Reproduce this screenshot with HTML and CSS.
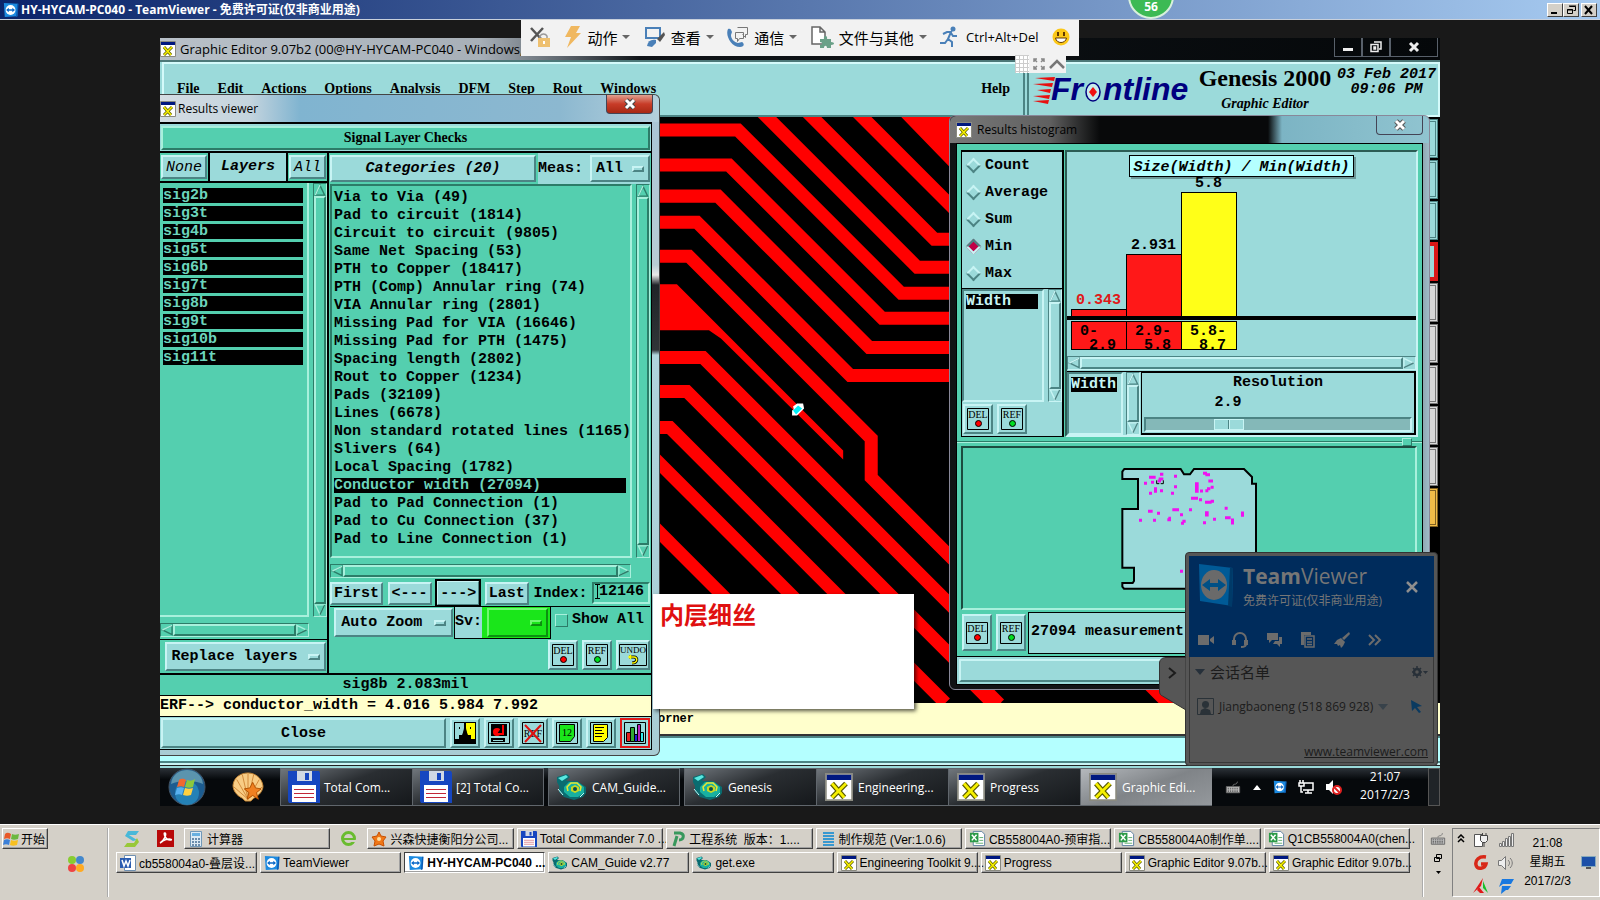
FILE: index.html
```html
<!DOCTYPE html>
<html lang="zh-CN">
<head>
  <meta charset="UTF-8">
  <meta name="viewport" content="width=device-width, initial-scale=1.0">
  <title>HY-HYCAM-PC040 - TeamViewer</title>
  <link rel="stylesheet" href="styles.css">
</head>
<body>
  <!-- Shared icons -->
  <svg class="defs" width="0" height="0">
    <symbol id="i-x" viewBox="0 0 16 16"><path fill="#fff" stroke="#8a8a80" d="M.5.5h15v15H.5z"/><path fill="#001880" d="M1 1h14v3H1z"/><path stroke="#5a5a00" stroke-width="3" d="M4 6l7 8M12 6l-8 8"/><path stroke="#f6f000" stroke-width="1.6" d="M4 6l7 8M12 6l-8 8"/></symbol>
    <symbol id="i-tv" viewBox="0 0 18 18"><path fill="#1c8ae0" d="M1 1l16 1-1 14-14 1z"/><path fill="#0b5cb4" d="M16 2h1.500l-1 14-2 1z"/><circle cx="8.500" cy="9" r="5.500" fill="#fff"/><path fill="#0a68c8" d="M3.500 9l3-2.500v1.700h4V6.500l3 2.500-3 2.500V9.800h-4v1.700z"/></symbol>
    <symbol id="i-floppy" viewBox="0 0 32 32"><path fill="#1646c0" d="M0 0h31l1 2v30H1l-1-2z"/><path fill="#d0d8e4" d="M9 0h15v10H9z"/><path fill="#1646c0" d="M17 2h4v7h-4z"/><path fill="#fff" d="M4 14h24v17H4z"/><path stroke="#c02838" d="M6 18.500h20M6 22.500h20M6 26.500h20"/></symbol>
    <symbol id="i-gen" viewBox="0 0 32 26"><path fill="#0a6c70" d="M1 3l10-3 3 3-4 4h11l9 6v6l-3 4-9 3-10-3-5-5v-6l-2-4z"/><path fill="#58e8e0" d="M2 4l8-3 2 2-6 4z"/><path fill="#18b0a0" d="M8 13l5-5h9l6 5v6l-6 4h-8l-6-5z"/><path fill="none" stroke="#e8e830" stroke-width="1.500" d="M12 17l-1-4 4-4h6l4 4-1 4"/><path fill="#c8d820" d="M15 13l4-2 4 2v4l-4 2-4-2z"/><circle cx="19" cy="15" r="2" fill="#08504c"/><path stroke="#c8f8f8" d="M2 15l5 6M24 23l4-4"/></symbol>
    <symbol id="i-xls" viewBox="0 0 18 18"><path fill="#fff" stroke="#5a80a0" d="M4.500 1.500h9l3 3v12h-12z"/><path fill="#2c9a48" d="M1 3h9v10H1z"/><path stroke="#fff" stroke-width="1.600" d="M3 5l5 6M8 5l-5 6"/><path stroke="#60b070" d="M11 8h4M11 11h4M7 14h8"/></symbol>
    <symbol id="i-key" viewBox="0 0 18 16"><path fill="#bbb" stroke="#666" d="M1.500 7.500h15v7h-15z"/><path stroke="#555" stroke-dasharray="1.500 1" d="M3 9.500h12M3 11.500h12M3 13h12"/><path fill="none" stroke="#777" d="M9 7c0-4 4 0 5-5"/></symbol>
    <symbol id="a-up" viewBox="0 0 13 13"><path fill="var(--face)" stroke="var(--dark)" stroke-width="1.500" d="M11.500 12L6.500 1.500 1.500 12z"/><path fill="none" stroke="var(--lite)" stroke-width="1.500" d="M6.500 1L1.500 12"/></symbol>
    <symbol id="a-down" viewBox="0 0 13 13"><path fill="var(--face)" stroke="var(--lite)" stroke-width="1.500" d="M1.500 1h10l-5 10.500z"/><path fill="none" stroke="var(--dark)" stroke-width="1.500" d="M11.500 1l-5 10.500"/></symbol>
    <symbol id="a-left" viewBox="0 0 13 13"><path fill="var(--face)" stroke="var(--dark)" stroke-width="1.500" d="M12 1.500L1.500 6.500 12 11.500z"/><path fill="none" stroke="var(--lite)" stroke-width="1.500" d="M12 1.500L1.500 6.500"/></symbol>
    <symbol id="a-right" viewBox="0 0 13 13"><path fill="var(--face)" stroke="var(--lite)" stroke-width="1.500" d="M1 1.500L11.500 6.500 1 11.500z"/><path fill="none" stroke="var(--dark)" stroke-width="1.500" d="M1 11.500L11.500 6.500"/></symbol>
  </svg>

  <header class="titlebar">
    <svg width="16" height="16"><use href="#i-tv"/></svg>
    <h1>HY-HYCAM-PC040 - TeamViewer - 免费许可证(仅非商业用途)</h1>
    <span class="badge">56</span>
    <div class="winbtns">
      <button aria-label="Minimize"><svg width="14" height="12"><path fill="#000" d="M3 8h6v2H3z"/></svg></button>
      <button aria-label="Restore"><svg width="14" height="12"><path fill="none" stroke="#000" d="M5.500 2.500h6v4h-2M3.500 5.500h5v4h-5zM5 2h7M3 6h6"/></svg></button>
      <button class="apart" aria-label="Close"><svg width="14" height="12"><path stroke="#000" stroke-width="2" d="M3 2l7 8M10 2L3 10"/></svg></button>
    </div>
  </header>

  <main class="stage">
    <div class="remote">

      <!-- Genesis graphic editor -->
      <section class="editor">
        <div class="editor-title">
          <svg width="16" height="16"><use href="#i-x"/></svg>
          <span class="glow">Graphic Editor 9.07b2 (00@HY-HYCAM-PC040 - Windows,</span>
          <div class="aero-btns">
            <button aria-label="Minimize"><svg width="14" height="12"><path fill="#eee" d="M2 7h10v3H2z"/></svg></button>
            <button aria-label="Restore"><svg width="14" height="12"><path fill="none" stroke="#eee" stroke-width="1.500" d="M5 1h7v7h-2M2 3.500h7v7H2zM5 6h1.500v2H5z"/></svg></button>
            <button class="wide" aria-label="Close"><svg width="14" height="12"><path stroke="#eee" stroke-width="3" d="M3 2l8 8M11 2l-8 8"/></svg></button>
          </div>
        </div>
        <div class="editor-head">
          <nav class="menu">
            <a href="#">File</a><a href="#">Edit</a><a href="#">Actions</a><a href="#">Options</a><a href="#">Analysis</a><a href="#">DFM</a><a href="#">Step</a><a href="#">Rout</a><a href="#">Windows</a>
            <a href="#" class="help">Help</a>
          </nav>
          <div class="brand">
            <svg class="logo" width="160" height="32" viewBox="0 0 160 32">
              <path fill="#e81010" d="M2 4l20-1-1 4zM0 10l20-1-1 4zM4 16l14-1-1 4zM0 22l17-1-1 4zM0 27l16-1-1 4z"/>
              <text x="18" y="26">Fr</text>
              <ellipse cx="60" cy="18" rx="7" ry="9" fill="#c8ecec" stroke="#00007f" stroke-width="1.500"/>
              <path fill="#f01010" d="M60 13l4 5-4 5-4-5z"/>
              <text x="70" y="26">ntline</text>
            </svg>
            <div class="product"><b>Genesis 2000</b><i>Graphic Editor</i></div>
            <div class="stamp">03 Feb 2017<br>09:06 PM</div>
          </div>
        </div>
        <div class="board">
          <!-- copper traces -->
          <svg class="traces" viewBox="160 117 1280 585" preserveAspectRatio="xMinYMin slice">
            <g fill="none" stroke="#f00" stroke-width="13">
              <path d="M650 130h87l163 163h60"/>
              <path d="M650 165h78l153 153h80"/>
              <path d="M650 196h67l151 151h90"/>
              <path d="M650 222h46l153 153h110"/>
              <path d="M650 256h38l182 182v39l90 90"/>
              <path d="M650 357h52l258 258"/>
              <path d="M650 391h36l312 312"/>
              <path d="M650 427h19l275 275"/>
              <path d="M650 454l260 260"/>
              <path d="M650 523l200 200"/>
              <path d="M756 107l160 160h50"/>
              <path d="M801 107l132 132h30"/>
              <path d="M851 107l110 110"/>
              <path d="M965 676l40 40M1140 676l40 40"/>
            </g>
            <path fill="#f00" d="M900 117h60v62zM650 284h26l166 166v9L720 338l-12-8h-58z"/>
            <path fill="#fff" d="M796 403h6l1 5-3 3-7-1-1-4zM791 410l3-2 6 3-4 4h-5z"/>
            <path fill="#00f0f8" d="M792 410l5-5 4 3-6 6z"/>
          </svg>
          <div class="toolstrip">
            <i></i><i></i><i></i><i class="red"></i><i class="grey"></i><i class="grey"></i><i class="grey"></i><i class="grey"></i><i class="grey"></i><i class="gold"></i>
          </div>
        </div>
        <div class="prompt">orner</div>
        <div class="status"></div>
      </section>

      <!-- Results viewer -->
      <section class="window viewer">
        <div class="win-title">
          <svg width="16" height="16"><use href="#i-x"/></svg>
          <span>Results viewer</span>
          <button class="close-red" aria-label="Close"><svg width="14" height="12"><path stroke="#444" stroke-width="5" d="M3 2l8 8M11 2l-8 8"/><path stroke="#fff" stroke-width="3" d="M3 2l8 8M11 2l-8 8"/></svg></button>
        </div>
        <div class="viewer-body">
          <div class="banner-wrap"><h2 class="banner">Signal Layer Checks</h2></div>
          <div class="panes">
            <div class="pane-left green">
              <div class="layer-head">
                <span><button class="raised teal">None</button></span>
                <strong>Layers</strong>
                <span><button class="raised teal">All</button></span>
              </div>
              <div class="list-row">
                <ul class="list layers">
                  <li>sig2b</li><li>sig3t</li><li>sig4b</li><li>sig5t</li><li>sig6b</li><li>sig7t</li><li>sig8b</li><li>sig9t</li><li>sig10b</li><li>sig11t</li>
                </ul>
                <div class="vscroll"><svg><use href="#a-up"/></svg><b></b><svg><use href="#a-down"/></svg></div>
              </div>
              <div class="hscroll short"><svg><use href="#a-left"/></svg><b></b><svg><use href="#a-right"/></svg></div>
              <div class="replace"><div class="option raised teal"><select aria-label="Layer mode"><option>Replace layers</option></select><i></i></div></div>
            </div>
            <div class="pane-right green">
              <div class="cat-head">
                <button class="raised teal cat">Categories (20)</button>
                <label for="meas">Meas:</label>
                <div class="option raised teal"><select id="meas"><option>All</option></select><i></i></div>
              </div>
              <div class="list-row">
                <ul class="list cats">
                  <li>Via to Via (49)</li><li>Pad to circuit (1814)</li><li>Circuit to circuit (9805)</li><li>Same Net Spacing (53)</li><li>PTH to Copper (18417)</li><li>PTH (Comp) Annular ring (74)</li><li>VIA Annular ring (2801)</li><li>Missing Pad for VIA (16646)</li><li>Missing Pad for PTH (1475)</li><li>Spacing length (2802)</li><li>Rout to Copper (1234)</li><li>Pads (32109)</li><li>Lines (6678)</li><li>Non standard rotated lines (1165)</li><li>Slivers (64)</li><li>Local Spacing (1782)</li><li class="on">Conductor width (27094)</li><li>Pad to Pad Connection (1)</li><li>Pad to Cu Connection (37)</li><li>Pad to Line Connection (1)</li>
                </ul>
                <div class="vscroll"><svg><use href="#a-up"/></svg><b></b><svg><use href="#a-down"/></svg></div>
              </div>
              <div class="hscroll"><svg><use href="#a-left"/></svg><b></b><svg><use href="#a-right"/></svg></div>
              <div class="step-row">
                <button class="raised teal">First</button>
                <button class="raised teal">&lt;---</button>
                <button class="raised teal focus">---&gt;</button>
                <button class="raised teal">Last</button>
                <label for="index">Index:</label>
                <span class="index-box"><input id="index" type="text" value="12146"><svg class="ibeam" width="5" height="15"><path fill="none" stroke="#000" d="M0 .5h5M2.500 0v15M0 14.500h5"/></svg></span>
              </div>
              <div class="zoom-row">
                <div class="option raised teal zoom"><select aria-label="Zoom mode"><option>Auto Zoom</option></select><i></i></div>
                <label class="sv" for="sv">Sv:</label>
                <div class="severity"><div class="option raised"><select id="sv"><option></option></select><i></i></div></div>
                <label class="show-all"><input type="checkbox">Show All</label>
              </div>
              <div class="tool-row">
                <button class="raised teal" aria-label="DEL"><svg width="22" height="22"><path fill="none" stroke="#000" d="M.5.5h21v21H.5z"/><text x="11" y="10" class="glyph">DEL</text><circle cx="11.500" cy="15.500" r="3" fill="#f00" stroke="#000"/></svg></button>
                <button class="raised teal" aria-label="REF"><svg width="22" height="22"><path fill="none" stroke="#000" d="M.5.5h21v21H.5z"/><text x="11" y="10" class="glyph">REF</text><circle cx="11.500" cy="15.500" r="3" fill="#0d2" stroke="#000"/></svg></button>
                <button class="raised teal undo" aria-label="UNDO"><svg width="28" height="22" viewBox="0 0 28 22"><path fill="none" stroke="#000" d="M.5.5h27v21H.5z"/><text x="14" y="9" class="glyph small">UNDO</text><path fill="none" stroke="#000" stroke-width="3" d="M10 13h5c4 0 4 6-2 6"/><path fill="none" stroke="#ff0" stroke-width="1.500" d="M10 13h5c4 0 4 6-2 6M12 11l-2 2 2 2"/></svg></button>
              </div>
            </div>
          </div>
          <div class="info">sig8b 2.083mil</div>
          <div class="erf">ERF--&gt; conductor_width = 4.016 5.984 7.992</div>
          <div class="bottom-row teal">
            <button class="raised teal close-wide">Close</button>
            <button class="raised teal" aria-label="Compare"><svg width="22" height="22"><path d="M0 0h22v22H0z"/><path fill="#9bdada" d="M1 1h9v7l-2 5H5v4H1z"/><path fill="#ff0" d="M21 1h-9v7l2 5h3v4h4z"/><path d="M5 5h1v2H5zM16 5h1v2h-1zM10 6h2l1 6H9z"/></svg></button>
            <button class="raised teal" aria-label="Report"><svg width="22" height="22"><path fill="#9bdada" stroke="#000" d="M.5.5h21v21H.5z"/><path d="M3 2h16v12H3zM3 16h14v4H3z"/><circle cx="9" cy="10" r="4" fill="#f00"/><path stroke="#f00" stroke-width="2" d="M9 12h6V3"/><path stroke="#9bdada" d="M5 18.500h10"/></svg></button>
            <button class="raised teal" aria-label="REF off"><svg width="22" height="22"><path fill="none" stroke="#000" d="M.5.5h21v21H.5z"/><text x="11" y="15" class="glyph">REF</text><path stroke="#e01010" stroke-width="2" d="M3 3l16 17M19 3L3 20"/></svg></button>
            <button class="raised teal" aria-label="Numbers"><svg width="22" height="22"><path fill="none" stroke="#000" d="M.5.5h21v21H.5z"/><path fill="#1ae61a" stroke="#000" d="M3.500 2.500h15v12l-4 5h-11z"/><text x="11" y="14" class="glyph">12</text></svg></button>
            <button class="raised teal" aria-label="Notes"><svg width="22" height="22"><path fill="none" stroke="#000" d="M.5.5h21v21H.5z"/><path fill="#ff0" stroke="#000" d="M3.500 2.500h14v13l-4 4h-10z"/><path stroke="#000" d="M5 5.500h9M5 8.500h7M5 11.500h9M5 14.500h7"/></svg></button>
            <button class="raised teal hot" aria-label="Histogram"><svg width="22" height="22"><path fill="none" stroke="#000" d="M.5.500h21v21H.5z"/><path fill="#e02020" stroke="#000" d="M2.500 10.500h4v9h-4z"/><path fill="#3a3" stroke="#000" d="M6.500 5.500h4v14h-4z"/><path fill="#22d" stroke="#000" d="M10.500 12.500h3v7h-3z"/><path fill="#b2b" stroke="#000" d="M13.500 2.500h3v17h-3z"/><path fill="#3ee" stroke="#000" d="M16.500 10.500h3v9h-3z"/></svg></button>
          </div>
        </div>
      </section>

      <div class="note">内层细丝</div>

      <!-- Results histogram -->
      <section class="window histogram">
        <div class="win-title">
          <svg width="16" height="16"><use href="#i-x"/></svg>
          <span>Results histogram</span>
          <button class="close-glass" aria-label="Close"><svg width="14" height="12"><path stroke="#555" stroke-width="5" d="M3 2l8 8M11 2l-8 8"/><path stroke="#fff" stroke-width="3" d="M3 2l8 8M11 2l-8 8"/></svg></button>
        </div>
        <div class="histo-body green">
          <div class="histo-top">
            <div class="stats teal">
              <div class="radios">
                <label><input type="radio" name="stat">Count</label>
                <label><input type="radio" name="stat">Average</label>
                <label><input type="radio" name="stat">Sum</label>
                <label><input type="radio" name="stat" checked>Min</label>
                <label><input type="radio" name="stat">Max</label>
              </div>
              <div class="list-row">
                <ul class="list"><li class="on">Width</li></ul>
                <div class="vscroll"><svg><use href="#a-up"/></svg><b></b><svg><use href="#a-down"/></svg></div>
              </div>
              <div class="mini-tools">
                <button class="raised teal" aria-label="DEL"><svg width="22" height="22"><path fill="none" stroke="#000" d="M.5.5h21v21H.5z"/><text x="11" y="10" class="glyph">DEL</text><circle cx="11.500" cy="15.500" r="3" fill="#f00" stroke="#000"/></svg></button>
                <button class="raised teal" aria-label="REF"><svg width="22" height="22"><path fill="none" stroke="#000" d="M.5.5h21v21H.5z"/><text x="11" y="10" class="glyph">REF</text><circle cx="11.500" cy="15.500" r="3" fill="#0d2" stroke="#000"/></svg></button>
              </div>
            </div>
            <div class="chart-pane teal">
              <div class="chart">
                <h3>Size(Width) / Min(Width)</h3>
                <div class="bars">
                  <div class="bar low"><span>0.343</span><b style="height:7px"></b></div>
                  <div class="bar"><span>2.931</span><b style="height:62px"></b></div>
                  <div class="bar yellow"><span>5.8</span><b style="height:124px"></b></div>
                </div>
              </div>
              <div class="bins">
                <div><span>0-</span><span>2.9</span></div>
                <div><span>2.9-</span><span>5.8</span></div>
                <div class="yellow"><span>5.8-</span><span>8.7</span></div>
              </div>
              <div class="hscroll"><svg><use href="#a-left"/></svg><b></b><svg><use href="#a-right"/></svg></div>
              <div class="resolution">
                <ul class="list"><li class="on">Width</li></ul>
                <div class="vscroll"><svg><use href="#a-up"/></svg><b></b><svg><use href="#a-down"/></svg></div>
                <div class="res-box">
                  <label for="res">Resolution</label>
                  <output for="res">2.9</output>
                  <input id="res" type="range" min="0" max="100" value="29">
                </div>
              </div>
            </div>
          </div>
          <div class="sash"><i></i></div>
          <div class="map">
            <svg width="138" height="123" viewBox="540 108 414 369">
              <path fill="#9bdada" stroke="#000" stroke-width="6" d="M547 122l6-8h169l10 16h18l12-16h150l24 24v20h12v315H735l-11 0H552l-5-6v-11h31l4-6v-40h-35V234h47v-90h-47z"/>
              <path stroke="#f010f0" stroke-width="9" fill="none" d="M627 139h20M660 130h10M656 144h14M702 136h9M612 157h9M633 154h9M653 150h10M702 167h9M627 187h9M660 179h9M693 187h9M789 127h12M796 131h14M805 150h14M796 179h9M801 173h10M812 169h9M780 180h9M753 202h21M777 206h9M795 214h20M812 211h10M624 241h14M651 247h9M697 236h20M747 236h9M720 251h9M854 232h9M795 252h11M795 245h11M597 268h9M639 268h9M682 266h11M685 262h8M727 271h10M723 277h9M789 275h9M819 265h9M855 260h17M873 267h9M873 276h9M903 246h9M903 253h9M720 421h9M642 173h9M642 181h9M765 158h11M765 166h11M765 174h11M765 181h11"/>
              <path fill="none" stroke="#000" stroke-width="3" d="M650 148v10h8M662 158h8v-10"/>
            </svg>
          </div>
          <div class="measure-row">
            <button class="raised teal" aria-label="DEL"><svg width="22" height="22"><path fill="none" stroke="#000" d="M.5.5h21v21H.5z"/><text x="11" y="10" class="glyph">DEL</text><circle cx="11.500" cy="15.500" r="3" fill="#f00" stroke="#000"/></svg></button>
            <button class="raised teal" aria-label="REF"><svg width="22" height="22"><path fill="none" stroke="#000" d="M.5.5h21v21H.5z"/><text x="11" y="10" class="glyph">REF</text><circle cx="11.500" cy="15.500" r="3" fill="#0d2" stroke="#000"/></svg></button>
            <div class="measure teal">27094 measurement</div>
          </div>
          <div class="histo-foot teal"><button class="raised teal" aria-label="Close"></button></div>
        </div>
      </section>

      <!-- TeamViewer session panel -->
      <aside class="tv-panel">
        <svg class="tab" width="27" height="54" viewBox="0 0 27 54"><path fill="#565656" stroke="#333" d="M27 .5H7C3 .5.5 3 .5 6v28c0 3 1 4 3 5L27 53z"/><path fill="none" stroke="#1c1c1c" stroke-width="2" d="M10 11l6 5-6 5"/></svg>
        <div class="tv-head">
          <svg width="38" height="46" viewBox="0 0 38 46"><path fill="#005a96" d="M2 0l34 4-1 38-32-5z"/><path fill="#003a68" d="M33 4h3l-1 39-4-1z"/><ellipse cx="17" cy="21" rx="13" ry="15" fill="#6a6a6a"/><path fill="#005086" d="M5 21l8-6v4h8v-4l8 6-8 6v-4h-8v4z"/></svg>
          <div class="tv-name"><p><b>Team</b>Viewer</p><small>免费许可证(仅非商业用途)</small></div>
          <button class="tv-close" aria-label="Close"><svg width="12" height="12"><path stroke="#8e8e8e" stroke-width="2.500" d="M1 1l10 10M11 1L1 11"/></svg></button>
          <div class="tv-tools">
            <button aria-label="Video"><svg width="16" height="16"><path d="M0 3h11v10H0zM12 7l4-3v8l-4-3z"/></svg></button>
            <button aria-label="Audio"><svg width="16" height="16"><path fill="none" stroke="#6c6c6c" stroke-width="2" d="M2 10V7a6 6 0 0112 0v3M14 12c0 3-3 3-5 3"/><path d="M0 8h4v5H0zM12 8h4v5h-4z"/></svg></button>
            <button aria-label="Chat"><svg width="16" height="16"><path d="M1 1h11v7H6l-3 3V8H1zM13 5h3v7h-2v3l-3-3H7l2-3h4z"/></svg></button>
            <button aria-label="Files"><svg width="16" height="16"><path d="M1 0h10v3H4v10H1z"/><path fill="none" stroke="#6c6c6c" stroke-width="1.500" d="M5 4h9v11H5zM7 7h5M7 10h5M7 12.500h5"/></svg></button>
            <button aria-label="Whiteboard"><svg width="16" height="16"><path d="M15 0l1 2-6 6-2-2zM7 6l4 4-2 4-2 2-1-3-2 1-1-2-3 0 3-4z"/></svg></button>
            <button aria-label="More"><svg width="16" height="16"><path fill="none" stroke="#6c6c6c" stroke-width="2" d="M1 3l5 5-5 5M7 3l5 5-5 5"/></svg></button>
          </div>
        </div>
        <div class="tv-body">
          <h4><i class="tri"></i>会话名单 <svg width="16" height="12"><circle cx="5" cy="6" r="3" fill="none" stroke="#283038" stroke-width="2.500"/><path stroke="#283038" stroke-width="1.500" d="M5 0v2M5 10v2M0 6h1M9 6h1M1 2l2 2M9 2L7 4M1 10l2-2M9 10L7 8"/><path fill="#283038" d="M11 5h5l-2.500 3z"/></svg></h4>
          <div class="person">
            <svg width="17" height="17"><path fill="none" stroke="#2a3238" d="M.5.500h16v16H.5z"/><circle cx="8.500" cy="6.500" r="3.500" fill="#2a3238"/><path fill="#2a3238" d="M3 16l1-4 4-2 5 2 1 4z"/></svg>
            <span>Jiangbaoneng (518 869 928)</span><i class="tri dim"></i>
            <svg class="ptr" width="12" height="14"><path fill="#0a3a60" d="M0 0l11 6-5 1 4 5-2 1-4-5-3 3z"/></svg>
          </div>
          <a href="#" class="site">www.teamviewer.com</a>
        </div>
      </aside>

      <!-- Remote Windows 7 taskbar -->
      <footer class="task7">
        <div class="launch">
          <svg width="38" height="38" viewBox="0 0 38 38"><circle cx="19" cy="19" r="18" fill="#1c5c90" stroke="#456"/><circle cx="19" cy="25" r="12" fill="#2a9ad0" opacity=".6"/><path fill="#9cc" opacity=".5" d="M3 16C4 6 12 2 19 2s15 4 16 14c-8-4-24-4-32 0z"/><path fill="#f06830" d="M11 12c3-2 5-1 7 0l-2 7c-2-1-4-1-7 0z"/><path fill="#8cc83c" d="M19 12c3 1 5 1 8-1l-2 8c-3 1-5 1-8 0z"/><path fill="#58b0f0" d="M9 20c3-1 5-1 7 0l-2 7c-2-1-4-1-7 0z"/><path fill="#ffd040" d="M17 20c3 1 5 1 8 0l-2 7c-3 1-5 1-8 0z"/></svg>
          <svg width="32" height="30" viewBox="0 0 34 32"><path fill="#f8cc84" stroke="#c08030" d="M1 14C2 5 10 1 17 1s15 5 16 14c0 5-4 10-10 13l-3 3h-6l-3-3C5 25 1 20 1 14z"/><path stroke="#d08838" d="M17 29L2 16M17 29L5 8M17 29L11 3M17 29V2M17 29l6-26M17 29l12-21M17 29l15-13"/><path fill="#f08020" stroke="#b05000" d="M22 11l3 6 6 1-5 4 2 7-6-4-6 4 2-7-5-4 6-1z"/></svg>
        </div>
        <button><svg width="32" height="32"><use href="#i-floppy"/></svg>Total Com...</button>
        <button class="end"><svg width="32" height="32"><use href="#i-floppy"/></svg>[2] Total Co...</button>
        <button class="end"><svg width="32" height="26"><use href="#i-gen"/></svg>CAM_Guide...</button>
        <button><svg width="32" height="26"><use href="#i-gen"/></svg>Genesis</button>
        <button><svg width="30" height="28"><use href="#i-x"/></svg>Engineering...</button>
        <button><svg width="30" height="28"><use href="#i-x"/></svg>Progress</button>
        <button class="active"><svg width="30" height="28"><use href="#i-x"/></svg>Graphic Edi...</button>
        <div class="tray7">
          <svg width="16" height="16"><use href="#i-key"/></svg>
          <svg width="8" height="5"><path fill="#fff" d="M0 5l4-5 4 5z"/></svg>
          <svg width="14" height="16"><use href="#i-tv"/></svg>
          <svg width="16" height="16"><path fill="none" stroke="#fff" stroke-width="1.500" d="M6 4h9v7H5M10 11v3M7 14h7M2 1v3M5 1v3M1 4h5v3H1zM3 7v6h2"/></svg>
          <svg width="16" height="16"><path fill="#fff" d="M0 5h3l4-4v14l-4-4H0z"/><circle cx="11" cy="11" r="4" fill="#fff" stroke="#e02020" stroke-width="2"/><path stroke="#e02020" stroke-width="2" d="M8 8l6 6"/></svg>
        </div>
        <time>21:07<br>2017/2/3</time>
        <span class="peek"></span>
      </footer>
    </div>

    <!-- TeamViewer toolbar -->
    <div class="tv-bar">
      <button aria-label="Close"><svg width="22" height="22"><path stroke="#555" stroke-width="2.500" d="M2 2l12 13M14 2L2 15"/><path fill="none" stroke="#999" stroke-width="1.500" d="M11 13V10a4 4 0 017 0v3"/><path fill="#eec070" d="M9 12h12v9H9z"/><path fill="#fff" d="M14 15h2v3h-2z"/></svg></button>
      <button><svg width="18" height="22"><path fill="#f0b860" d="M7 0h9l-4 7h5L3 22l4-11H1z"/></svg>动作<i></i></button>
      <button><svg width="22" height="22"><path fill="none" stroke="#4a80b8" stroke-width="2" d="M2 2h14v10H2z"/><path fill="#4a80b8" d="M3 20c1-5 4-7 9-6v3l-4 4z"/><path fill="#555" d="M20 6l1 3-5 7-3-3z"/></svg>查看<i></i></button>
      <button><svg width="22" height="22"><path fill="#4a80b8" d="M1 3c2-1 3 0 4 3l-1 3c0 4 3 7 7 8l4-1c3 2 2 5-2 5C4 21-2 9 1 3z"/><path fill="#f2f2f2" stroke="#777" d="M10.500 1.500h10v7h-2v3l-3-3M8.500 6.500h8v6h-4l-2 3v-3h-2z"/></svg>通信<i></i></button>
      <button><svg width="23" height="22"><path fill="#fff" stroke="#666" stroke-width="1.500" d="M1 1h8l5 5v12H1zM9 1v5h5"/><path fill="#6aa088" d="M9 13h4c-1-4 4-4 3 0h4v3c4 0 4 3 0 3v3h-4c0-3-3-3-3 0H9v-3c3 0 3-3 0-3z"/></svg>文件与其他<i></i></button>
      <button class="cad"><svg width="18" height="22"><circle cx="13" cy="3" r="2.500" fill="#4a80b8"/><path fill="none" stroke="#4a80b8" stroke-width="2" d="M3 8l4-2h4l-3 7 4 3v5M8 13l-3 4H0M11 7l2 3h4"/></svg>Ctrl+Alt+Del</button>
      <button aria-label="Feedback"><svg width="18" height="18"><circle cx="9" cy="9" r="8.500" fill="#fcc818"/><path fill="#603800" d="M5 4h2v4H5zM11 4h2v4h-2z"/><path fill="#fff" stroke="#603800" d="M3.500 10h11c-1 6-10 6-11 0z"/></svg></button>
      <div class="tv-bar-tab"><span></span><svg width="12" height="12"><path fill="none" stroke="#888" stroke-width="1.500" d="M1 4V1h3M8 1h3v3M11 8v3H8M4 11H1V8M1 1l3 3M11 1L8 4M11 11L8 8M1 11l3-3"/></svg><svg width="16" height="12"><path fill="none" stroke="#777" stroke-width="2.500" d="M1 10l7-7 7 7"/></svg></div>
    </div>
  </main>

  <!-- Local taskbar -->
  <footer class="taskbar">
    <div class="start">
      <button><svg width="17" height="16"><path fill="#e85828" d="M2 3c2-2 4-1 6 0L7 8C5 7 3 7 1 8z"/><path fill="#6cb840" d="M9 3c2 1 4 1 7 0l-1 5c-3 1-5 1-7 0z"/><path fill="#3c80d8" d="M1 9c2-1 4-1 6 0l-1 5c-2-1-4-1-6 0z"/><path fill="#f8c020" d="M8 9c2 1 4 1 7 0l-1 5c-3 1-5 1-7 0z"/></svg>开始</button>
      <svg class="fourball" width="18" height="18"><circle cx="5" cy="5" r="4" fill="#8c3"/><circle cx="13" cy="5" r="4" fill="#48c"/><circle cx="5" cy="13" r="4" fill="#e44"/><circle cx="13" cy="13" r="4" fill="#fa2"/></svg>
    </div>
    <div class="tasks">
      <div class="task-row">
        <span><svg width="18" height="18"><path fill="#48b8d8" d="M5 1h11l-3 4H6l8 5-4 1-8-5z"/><path fill="#98c838" d="M14 8l2 4-4 5H1l3-4h7z"/></svg></span>
        <span><svg width="17" height="17"><path fill="#b80808" d="M0 0h17v17H0z"/><path fill="none" stroke="#fff" stroke-width="1.500" d="M3 13c4-2 7-9 5-10s0 8 6 7c2-1-4-2-8 1"/></svg></span>
        <button><svg width="16" height="16"><path fill="#dceaf4" stroke="#7098b8" d="M2.500.5h11v15h-11z"/><path fill="#68b0e0" d="M4 2h8v3H4z"/><path stroke="#6a8cac" stroke-width="2" stroke-dasharray="2 1" d="M4 8h8M4 11h8M4 14h8"/></svg>计算器</button>
        <span><svg width="17" height="17"><circle cx="8.500" cy="8.500" r="6" fill="none" stroke="#6abc30" stroke-width="3"/><path stroke="#6abc30" stroke-width="2" d="M4 9h10"/><path fill="#d4d0c8" d="M10 10h7v2h-7z"/></svg></span>
        <button><svg width="16" height="16"><path fill="#f07818" stroke="#c85000" d="M8 1l2 4 5 1-3 4 1 5-5-2-5 2 1-5-3-4 5-1z"/><circle cx="8" cy="8" r="2" fill="#ffe0a0"/></svg>兴森快捷衡阳分公司...</button>
        <button><svg width="16" height="16"><use href="#i-floppy"/></svg>Total Commander 7.0 ...</button>
        <button><svg width="16" height="16"><path fill="none" stroke="#38985c" stroke-width="3" d="M4 2h6c5 1 4 7-1 7M7 5L4 15"/></svg>工程系统&nbsp; 版本：1....</button>
        <button><svg width="16" height="16"><path stroke="#3898d0" stroke-width="2" d="M3 2h11M3 5h11M3 8h11M3 11h11M3 14h11"/></svg>制作规范 (Ver:1.0.6)</button>
        <button><svg width="17" height="17"><use href="#i-xls"/></svg>CB558004A0-预审指...</button>
        <button><svg width="17" height="17"><use href="#i-xls"/></svg>CB558004A0制作单....</button>
        <button><svg width="17" height="17"><use href="#i-xls"/></svg>Q1CB558004A0(chen...</button>
      </div>
      <div class="task-row">
        <button><svg width="16" height="16"><path fill="#fff" stroke="#7090b0" d="M4.500.5h11v15h-11z"/><path fill="#2a5cb0" d="M0 3h11v10H0z"/><path fill="none" stroke="#fff" stroke-width="1.500" d="M2 5l2 6 2-5 2 5 2-6"/></svg>cb558004a0-叠层设...</button>
        <button><svg width="16" height="16"><use href="#i-tv"/></svg>TeamViewer</button>
        <button class="active"><svg width="16" height="16"><use href="#i-tv"/></svg>HY-HYCAM-PC040 ...</button>
        <button><svg width="16" height="14"><use href="#i-gen"/></svg>CAM_Guide v2.77</button>
        <button><svg width="16" height="14"><use href="#i-gen"/></svg>get.exe</button>
        <button><svg width="16" height="16"><use href="#i-x"/></svg>Engineering Toolkit 9....</button>
        <button><svg width="16" height="16"><use href="#i-x"/></svg>Progress</button>
        <button><svg width="16" height="16"><use href="#i-x"/></svg>Graphic Editor 9.07b...</button>
        <button><svg width="16" height="16"><use href="#i-x"/></svg>Graphic Editor 9.07b...</button>
      </div>
    </div>
    <div class="lang">
      <svg width="16" height="15"><use href="#i-key"/></svg>
      <svg width="9" height="9"><path fill="none" stroke="#000" d="M2.500.5h5v4h-5zM.5 3.500h5v4h-5z"/></svg>
      <svg width="5" height="3"><path d="M0 0h5L2.500 3z"/></svg>
    </div>
    <div class="tray">
      <svg width="8" height="10"><path fill="none" stroke="#000" stroke-width="1.500" d="M1 4l3-3 3 3M1 8l3-3 3 3"/></svg>
      <div class="tray-icons">
        <svg width="16" height="16"><path fill="#fff" stroke="#555" d="M1.500 2.500h8v12h-8z"/><path fill="#eee" stroke="#444" d="M7.500 3.500h7v5l-2 2h-3l-2-2zM11 10v5M9.500 1v2M13 1v2"/></svg>
        <svg width="16" height="16"><path fill="#eee" stroke="#777" d="M1.500 11.500h2v3h-2zM4.500 9.500h2v5h-2zM7.500 6.500h2v8h-2zM10.500 4.500h2v10h-2zM13.500 1.500h2v13h-2z"/></svg>
        <svg width="16" height="16"><path fill="none" stroke="#d82818" stroke-width="3.500" d="M13 2C6 1 2 5 3 10c1 5 9 4 10-1H8"/></svg>
        <svg width="16" height="16"><path fill="#eee" stroke="#777" d="M.5 5.500h3l4-4v13l-4-4h-3z"/><path fill="none" stroke="#777" d="M10 5c2 2 2 4 0 6M12 3c3 3 3 7 0 10"/></svg>
        <svg width="16" height="16"><path fill="#e01818" d="M10 0L8 8l-8 7z"/><path fill="#18c028" d="M10 3l5 12-5-5z"/><path fill="#e01818" d="M6 9l5 6H7L4 12z"/></svg>
        <svg width="16" height="16"><path fill="#1878e0" d="M4 1h12l-3 5H5L1 9zM4 8h9l-3 4H8l-5 4z"/></svg>
      </div>
      <time>21:08<br>星期五<br>2017/2/3</time>
      <svg width="15" height="14"><path fill="#1c50a8" stroke="#8ab" d="M.5.5h14v10H.5z"/><path fill="#555" d="M5 11h5v2H5z"/></svg>
    </div>
  </footer>
</body>
</html>
```
FILE: styles.css
```css
:root {
  --face: #9bdada;
  --lite: #c8f4f4;
  --dark: #4c8484;
  --mono: "Liberation Mono", "Courier New", monospace;
  --serif: "Liberation Serif", "Times New Roman", serif;
  --sans: "Open Sans", "Noto Sans CJK SC", sans-serif;
}

* {
  box-sizing: border-box;
}

body {
  margin: 0;
  min-height: 100vh;
  display: flex;
  flex-direction: column;
  background: #191919;
  font-family: var(--sans);
  font-size: 12px;
  color: #000;
}

h1, h2, h3, h4, p, ul {
  margin: 0;
  padding: 0;
  font-size: inherit;
}

ul {
  list-style: none;
}

button, select, input {
  font: inherit;
  color: inherit;
  margin: 0;
}

button {
  padding: 0;
  border: 0;
  background: none;
}

svg {
  display: block;
  flex: none;
}

.defs {
  position: absolute;
}

.glyph {
  font: 10px var(--serif);
  text-anchor: middle;
}

.glyph.small {
  font-size: 9px;
}

/* Motif colours and bevels */
.teal {
  --face: #9bdada;
  --lite: #c8f4f4;
  --dark: #4c8484;
  background: var(--face);
}

.green {
  --face: #54cfaf;
  --lite: #a8f0dc;
  --dark: #2c7c68;
  background: var(--face);
}

.raised {
  border: 2px solid;
  border-color: var(--lite) var(--dark) var(--dark) var(--lite);
}

/* Outer title bar */
.titlebar {
  position: relative;
  display: flex;
  align-items: center;
  gap: 2px;
  height: 20px;
  padding: 0 3px;
  background: linear-gradient(90deg, #0a246a, #a6caf0);
  border-bottom: 1px solid #c8d0dc;
  color: #fff;
}

.titlebar h1 {
  flex: 1;
  font-weight: bold;
  line-height: 18px;
  white-space: nowrap;
}

.badge {
  position: absolute;
  left: 72%;
  top: -27px;
  width: 46px;
  height: 46px;
  margin-left: -24px;
  border: 2px solid #d8f0dc;
  border-radius: 50%;
  background: #3cba54;
  text-align: center;
  line-height: 64px;
  font-weight: bold;
}

.winbtns {
  display: flex;
}

.winbtns button {
  width: 16px;
  height: 14px;
  background: #d4d0c8;
  border: 1px solid;
  border-color: #fff #404040 #404040 #fff;
}

.winbtns .apart {
  margin-left: 2px;
}

.stage {
  position: relative;
  flex: 1;
  display: flex;
  padding: 18px 10%;
}

.remote {
  position: relative;
  flex: 1;
  display: flex;
  flex-direction: column;
  min-height: 768px;
  min-width: 0;
  overflow: hidden;
}

/* Graphic editor */
.editor {
  flex: 1;
  display: flex;
  flex-direction: column;
  background: #000;
}

.editor-title {
  display: flex;
  align-items: center;
  gap: 4px;
  height: 24px;
  border-bottom: 2px solid #4c7878;
  background: linear-gradient(90deg, #b8c0c8, #a8b0b8 320px, #606870 400px, #101418 480px, #05080a);
}

.glow {
  flex: 1;
  font-size: 13px;
  white-space: nowrap;
}

.aero-btns {
  display: flex;
  align-self: flex-start;
  margin-right: 2px;
}

.aero-btns button {
  display: flex;
  justify-content: center;
  align-items: center;
  width: 28px;
  height: 19px;
  border: 1px solid #58606a;
  border-top: 0;
}

.aero-btns .wide {
  width: 48px;
}

.editor-head {
  display: flex;
  height: 55px;
  background: #9bdada;
}

.menu {
  flex: 1;
  display: flex;
  align-items: center;
  gap: 18px;
  margin-left: 2px;
  padding: 0 13px 2px;
  border: 2px solid;
  border-color: #d4fafa #4c8484 #4c8484 #d4fafa;
  font: bold 14px var(--serif);
}

.menu a {
  color: #000;
  text-decoration: none;
}

.menu .help {
  margin-left: auto;
}

.brand {
  display: flex;
  gap: 4px;
  flex: 0 0 413px;
  margin-left: 2px;
  padding: 0 2px 0 4px;
  border: 2px solid;
  border-color: #d4fafa #d4fafa #d4fafa #4c8484;
}

.logo {
  margin-top: 10px;
}

.logo text {
  font: italic bold 32px "Liberation Sans", Arial, sans-serif;
  fill: #00007f;
}

.product {
  flex: 1;
  display: flex;
  flex-direction: column;
  align-items: center;
  font: bold 14px/24px var(--serif);
  white-space: nowrap;
}

.product b {
  font-size: 24px;
  line-height: 28px;
}

.stamp {
  padding-top: 3px;
  font: italic bold 15px/15px var(--mono);
  text-align: center;
  white-space: nowrap;
}

.board {
  flex: 1;
  position: relative;
  display: flex;
  justify-content: flex-end;
  min-height: 0;
}

.traces {
  position: absolute;
  left: 0;
  top: 0;
  width: 100%;
  height: 100%;
}

.toolstrip {
  position: relative;
  width: 14px;
  margin-right: 2px;
  display: flex;
  flex-direction: column;
}

.toolstrip i {
  height: 39px;
  margin-top: 2px;
  border: 3px double #4c8484;
  background: #9bdada;
}

.toolstrip .red {
  border: 4px solid #d81818;
}

.toolstrip .grey {
  background: #d8d8d8;
  border-color: #777;
}

.toolstrip .gold {
  background: #f0bc48;
  border-color: #806020;
}

.prompt {
  height: 33px;
  padding: 9px 0 0 498px;
  background: #ffffcc;
  border-bottom: 2px solid #333;
  font: bold 12px var(--mono);
}

.status {
  height: 32px;
  background: linear-gradient(#4c8484 2px, #b4ffff 2px 25px, #4c8484 25px 27px, #c8f4f4 27px 29px, #222 29px 30px, #9bdada 30px);
}

/* Remote windows */
.window {
  position: absolute;
  display: flex;
  flex-direction: column;
  border: 1px solid #444;
  border-radius: 6px;
}

.win-title {
  display: flex;
  align-items: center;
  gap: 5px;
  height: 27px;
  font-size: 12px;
}

.win-title button {
  display: flex;
  justify-content: center;
  align-items: center;
  align-self: flex-start;
  width: 47px;
  height: 19px;
  margin: 0 0 0 auto;
  border: 1px solid #445;
  border-top: 0;
  border-radius: 0 0 4px 4px;
}

.viewer {
  left: 0;
  top: 56px;
  width: 500px;
  height: 662px;
  padding-right: 7px;
  border-left: 0;
  border-radius: 0 6px 6px 0;
  background: linear-gradient(180deg, #a8c4d4, #b8ccd4 170px, #e8e8e8 180px, #202428 190px, #303438 255px, #b0d4dc 260px, #a8ccd4);
}

.viewer .win-title {
  gap: 2px;
  margin-right: -7px;
  padding-right: 6px;
  background: linear-gradient(90deg, #d4dce2, #c4d4de 90px, #80b4d0 140px, #8cb8d0 400px, #b4d0dc);
  border-radius: 0 6px 0 0;
}

.viewer .win-title button {
  background: linear-gradient(#e0a090, #c83c28 50%, #a82814);
}

.viewer-body {
  flex: 1;
  display: flex;
  flex-direction: column;
  margin-bottom: 5px;
  border: solid #000;
  border-width: 2px 1px 1px 0;
  font: bold 15px var(--mono);
  min-height: 0;
}

.banner-wrap {
  padding: 2px 1px 1px;
  background: #9bdada;
}

.banner {
  height: 24px;
  border: 2px solid;
  border-color: #a8f0dc #2c7c68 #2c7c68 #a8f0dc;
  background: #54cfaf;
  font: bold 14px/19px var(--serif);
  text-align: center;
}

.panes {
  flex: 1;
  display: flex;
  min-height: 0;
  border-top: 2px solid #000;
  border-bottom: 2px solid #000;
}

.pane-left {
  display: flex;
  flex-direction: column;
  width: 169px;
  border-right: 2px solid #000;
}

.layer-head {
  display: flex;
  gap: 2px;
  height: 30px;
  border-bottom: 2px solid #000;
  background: #000;
  font-style: italic;
}

.layer-head span {
  padding: 2px 1px;
  background: #54cfaf;
}

.layer-head button {
  height: 24px;
  padding: 0 3px;
  font-weight: normal;
}

.layer-head strong {
  flex: 1;
  background: #9bdada;
  text-align: center;
  line-height: 28px;
}

.list-row {
  flex: 1;
  display: flex;
  gap: 4px;
  min-height: 0;
}

.list {
  flex: 1;
  min-width: 0;
  padding: 3px 4px 0 2px;
  border: 2px solid;
  border-color: var(--dark) var(--lite) var(--lite) var(--dark);
  line-height: 15px;
  white-space: nowrap;
}

.list li {
  margin-bottom: 3px;
}

.layers li,
.list .on {
  background: #000;
  color: var(--lite);
}

.layers {
  border-left: 0;
  border-top: 0;
  padding: 5px 4px 0 3px;
}

.layers li,
.cats .on {
  color: #6cd4bc;
}

.cats {
  padding: 4px 4px 0 2px;
}

.vscroll,
.hscroll {
  display: flex;
  flex: 0 0 14px;
  border: 1px solid;
  border-color: var(--dark) var(--lite) var(--lite) var(--dark);
}

.vscroll {
  flex-direction: column;
}

.vscroll svg,
.hscroll svg {
  width: 12px;
  height: 12px;
}

.vscroll b,
.hscroll b {
  flex: 1;
  border: 2px solid;
  border-color: var(--lite) var(--dark) var(--dark) var(--lite);
}

.hscroll {
  margin: 6px 19px 2px 0;
}

.hscroll.short {
  margin-right: 18px;
}

.replace {
  padding: 2px 1px 2px 5px;
  border-top: 1px solid #000;
}

.option {
  display: flex;
  align-items: center;
  justify-content: space-around;
  height: 29px;
}

.option select {
  appearance: none;
  padding: 0;
  border: 0;
  background: none;
}

.option i {
  width: 12px;
  height: 6px;
  border: 2px solid;
  border-color: var(--lite) var(--dark) var(--dark) var(--lite);
}

.pane-right {
  flex: 1;
  display: flex;
  flex-direction: column;
  padding: 0 1px;
  min-width: 0;
}

.cat-head {
  display: flex;
  align-items: center;
  gap: 2px;
  height: 31px;
  background: linear-gradient(90deg, #54cfaf 208px, #9bdada 208px);
}

.cat {
  width: 206px;
  height: 27px;
  font-style: italic;
}

.cat-head .option {
  flex: 1;
  margin-left: 5px;
  height: 27px;
}

.step-row {
  display: flex;
  align-items: center;
  justify-content: space-between;
  height: 26px;
}

.step-row button {
  height: 23px;
  padding: 0 2px;
}

.step-row .focus {
  height: 26px;
  outline: 2px solid #000;
  outline-offset: -1px;
}

.index-box {
  position: relative;
}

.index-box input {
  display: block;
  width: 58px;
  height: 22px;
  padding: 0 0 4px 5px;
  border: 2px solid;
  border-color: #2c7c68 #a8f0dc #a8f0dc #2c7c68;
  background: none;
}

.ibeam {
  position: absolute;
  left: 3px;
  top: 2px;
}

.zoom-row {
  display: flex;
  height: 33px;
  border-top: 1px solid #000;
}

.zoom {
  width: 119px;
  margin: 1px 1px 0 4px;
}

.sv {
  padding-top: 6px;
  background: #9bdada;
  border-left: 1px solid #000;
  border-bottom: 1px solid #000;
}

.severity {
  --lite: #70f870;
  --dark: #0c9010;
  width: 69px;
  padding: 1px 2px 1px 5px;
  border: solid #000;
  border-width: 0 1px 1px 0;
  background: #1ae61a;
}

.severity .option {
  justify-content: flex-end;
  padding-right: 4px;
}

.show-all {
  display: flex;
  gap: 4px;
  padding: 4px 0 0 4px;
  white-space: nowrap;
}

.show-all input {
  appearance: none;
  width: 13px;
  height: 13px;
  margin-top: 3px;
  border: 1px solid;
  border-color: #a8f0dc #2c7c68 #2c7c68 #a8f0dc;
}

.tool-row {
  display: flex;
  justify-content: flex-end;
  gap: 4px;
  height: 34px;
  padding-top: 1px;
}

.tool-row button,
.mini-tools button,
.bottom-row button,
.measure-row button {
  display: flex;
  align-items: center;
  justify-content: center;
  width: 30px;
  height: 30px;
}

.tool-row .undo {
  width: 34px;
}

.info {
  height: 21px;
  background: #54cfaf;
  text-align: center;
  line-height: 20px;
  border-bottom: 1px solid #000;
}

.erf {
  height: 21px;
  background: #ffffcc;
  line-height: 19px;
  border-bottom: 1px solid #000;
}

.bottom-row {
  display: flex;
  gap: 4px;
  padding: 1px 1px;
}

.bottom-row .close-wide {
  flex: 1;
}

.bottom-row .hot {
  border-color: #e01818;
}

.note {
  position: absolute;
  left: 493px;
  top: 556px;
  width: 261px;
  height: 115px;
  padding: 2px 7px;
  background: #fff;
  box-shadow: 2px 2px 4px #000a;
  color: #e01010;
  font: bold 24px/36px "Noto Sans CJK SC", sans-serif;
}

/* Histogram window */
.histogram {
  left: 789px;
  top: 77px;
  width: 481px;
  height: 575px;
  padding: 0 6px;
  border-color: #889;
  background: linear-gradient(90deg, #101214, #1a1c1e 90%, #a0bcc8);
}

.histogram .win-title {
  margin: 0 -6px;
  padding: 0 6px;
  border-radius: 6px 6px 0 0;
  background: linear-gradient(90deg, #787878, #606060 100px, #08090a 150px, #08090a 318px, #7cb4c4 332px, #90c4d0);
}

.histo-body {
  flex: 1;
  display: flex;
  flex-direction: column;
  margin-bottom: 4px;
  border: 1px solid #000;
  font: bold 15px var(--mono);
  min-height: 0;
}

.histo-top {
  display: flex;
  gap: 1px;
  height: 287px;
  margin: 6px 4px 0;
}

.stats {
  display: flex;
  flex-direction: column;
  width: 103px;
  border: 2px solid #000;
  border-width: 2px 2px 1px 1px;
}

.radios {
  display: flex;
  flex-direction: column;
  height: 137px;
  border-bottom: 1px solid #000;
}

.radios label {
  display: flex;
  align-items: center;
  gap: 6px;
  height: 27px;
  padding-left: 6px;
}

.radios input {
  appearance: none;
  width: 11px;
  height: 11px;
  border: 2px solid;
  border-color: var(--lite) var(--dark) var(--dark) var(--lite);
  transform: rotate(45deg);
}

.radios input:checked {
  background: #c00048;
  border-color: var(--dark) var(--lite) var(--lite) var(--dark);
}

.mini-tools {
  display: flex;
  gap: 4px;
  padding: 2px 1px;
}

.chart-pane {
  flex: 1;
  display: flex;
  flex-direction: column;
  border: 2px solid;
  border-color: #2c5c54 #c8f4f4 #c8f4f4 #2c5c54;
}

.chart {
  display: flex;
  flex-direction: column;
  align-items: center;
  justify-content: space-between;
  height: 168px;
  padding-top: 3px;
  border-bottom: 4px solid #000;
}

.chart h3 {
  height: 22px;
  padding: 0 3px;
  border: 1px solid #000;
  background: #b4ffff;
  box-shadow: 2px 2px 0 #6c9898;
  font-style: italic;
  line-height: 24px;
}

.bars,
.bins {
  display: flex;
  align-self: flex-start;
  align-items: flex-end;
  padding-left: 4px;
}

.bars {
  height: 139px;
}

.bar {
  display: flex;
  flex-direction: column;
  width: 55px;
  text-align: center;
  line-height: 16px;
}

.bar b {
  margin-right: -1px;
  border: 1px solid #000;
  border-bottom: 0;
  background: #ff1818;
}

.low span {
  color: #e01818;
}

.yellow b,
.bins .yellow {
  background: #ffff18;
}

.bins {
  height: 36px;
  align-items: flex-start;
  padding-top: 1px;
}

.bins div {
  display: flex;
  flex-direction: column;
  width: 56px;
  height: 29px;
  margin-right: -1px;
  padding: 3px 10px 0 8px;
  border: 1px solid #000;
  background: #ff1818;
  line-height: 14px;
}

.bins span + span {
  align-self: flex-end;
}

.chart-pane .hscroll {
  margin: 0 0 1px;
}

.resolution {
  flex: 1;
  display: flex;
  gap: 3px;
  border-top: 1px solid #000;
}

.resolution .list {
  flex: 0 0 56px;
}

.resolution .vscroll {
  margin-right: -2px;
}

.res-box {
  flex: 1;
  display: grid;
  justify-items: center;
  border: 2px solid #000;
  border-width: 1px 2px 2px 1px;
  padding: 1px 2px;
}

.res-box output {
  margin-right: 100px;
}

.res-box input {
  appearance: none;
  width: 100%;
  height: 15px;
  align-self: end;
  background: #84b8b8;
  border: 2px solid;
  border-color: #4c8484 #c8f4f4 #c8f4f4 #4c8484;
}

.res-box input::-webkit-slider-thumb {
  appearance: none;
  width: 30px;
  height: 11px;
  border: 1px solid #c8f4f4;
  background: linear-gradient(90deg, #9bdada 13px, #4c8484 13px 14px, #c8f4f4 14px 15px, #9bdada 15px);
}

.sash {
  display: flex;
  justify-content: flex-end;
  align-items: center;
  height: 9px;
  padding-right: 10px;
  background: linear-gradient(#54cfaf 4px, #2c7c68 4px 5px, #a8f0dc 5px 6px, #54cfaf 6px);
}

.sash i {
  width: 10px;
  height: 8px;
  border: 1px solid;
  border-color: #a8f0dc #2c7c68 #2c7c68 #a8f0dc;
  background: #54cfaf;
}

.map {
  display: flex;
  align-items: center;
  justify-content: center;
  height: 164px;
  margin: 0 5px 0 4px;
  border: 2px solid;
  border-color: #1c4c40 #a8f0dc #a8f0dc #1c4c40;
}

.measure-row {
  display: flex;
  gap: 4px;
  height: 46px;
  padding: 2px 4px 2px 5px;
}

.measure-row button {
  height: 37px;
  margin-top: 2px;
}

.measure {
  flex: 1;
  margin-left: -2px;
  border: 1px solid #000;
  padding-left: 2px;
  line-height: 38px;
}

.histo-foot {
  flex: 1;
  display: flex;
  padding: 2px;
  border-top: 1px solid #000;
}

.histo-foot button {
  flex: 1;
}

/* Session panel */
.tv-panel {
  position: absolute;
  right: 2px;
  bottom: 40px;
  width: 253px;
  height: 214px;
  padding: 3px;
  border: 1px solid #333;
  border-radius: 4px;
  background: #565656;
  color: #1c1c1c;
}

.tab {
  position: absolute;
  left: -27px;
  top: 104px;
}

.tv-head {
  display: flex;
  flex-wrap: wrap;
  align-content: space-between;
  align-items: flex-start;
  gap: 8px;
  height: 101px;
  padding: 8px 8px 9px;
  background: #002c5c;
  color: #767676;
}

.tv-name {
  flex: 1;
  white-space: nowrap;
}

.tv-name p {
  font-size: 21px;
  line-height: 25px;
}

.tv-name small {
  font-size: 12px;
  line-height: 24px;
}

.tv-close {
  margin: 17px 8px 0 0;
}

.tv-tools {
  display: flex;
  gap: 18px;
  width: 100%;
  padding-left: 1px;
  fill: #6c6c6c;
}

.tv-body {
  display: flex;
  flex-direction: column;
  height: 106px;
  padding: 3px 5px 0;
  border: solid #383838;
  border-width: 0 1px 1px;
}

.tv-body h4 {
  display: flex;
  align-items: center;
  gap: 5px;
  font-size: 15px;
  font-weight: normal;
  line-height: 24px;
}

.tv-body h4 svg,
.ptr {
  margin-left: auto;
}

.tri {
  border: 5px solid transparent;
  border-top: 6px solid #26303a;
  border-bottom: 0;
}

.tri.dim {
  border-top-color: #38424a;
}

.person {
  display: flex;
  align-items: center;
  gap: 5px;
  margin-top: 14px;
  padding: 0 5px 0 2px;
}

.person span {
  font-size: 12px;
}

.site {
  margin-top: auto;
  align-self: flex-end;
  color: inherit;
  line-height: 20px;
}

/* Remote taskbar */
.task7 {
  display: flex;
  height: 38px;
  background: linear-gradient(#2c3238, #06090c 30%, #06090c);
  color: #fff;
}

.launch {
  display: flex;
  align-items: center;
  gap: 26px;
  width: 120px;
  padding-left: 8px;
}

.task7 button {
  display: flex;
  align-items: center;
  gap: 4px;
  flex: 0 1 132px;
  min-width: 0;
  padding-left: 7px;
  border: 1px solid #60666c;
  border-width: 1px 0 1px 1px;
  background: linear-gradient(160deg, #70767c, #2a2e32 45%, #15181b);
  white-space: nowrap;
  text-align: left;
  overflow: hidden;
}

.task7 .end {
  margin-right: 4px;
  border-right-width: 1px;
}

.task7 .active {
  background: linear-gradient(160deg, #b4b8bc, #808488 50%, #94989c);
}

.tray7 {
  display: flex;
  flex: 1;
  align-items: center;
  justify-content: space-between;
  padding: 0 0 0 13px;
}

.task7 time {
  width: 86px;
  text-align: center;
  line-height: 18px;
}

.peek {
  width: 12px;
  border: 1px solid #555;
  background: #202428;
}

/* Session toolbar */
.tv-bar {
  position: absolute;
  top: 0;
  left: 50%;
  transform: translateX(-50%);
  display: flex;
  align-items: center;
  justify-content: space-between;
  width: 558px;
  height: 36px;
  padding: 0 9px 2px 8px;
  background: #f2f2f2;
}

.tv-bar button {
  display: flex;
  align-items: center;
  gap: 5px;
  font-size: 15px;
  white-space: nowrap;
}

.tv-bar .cad {
  gap: 8px;
  font-size: 13px;
}

.tv-bar button i {
  border: 4px solid transparent;
  border-top-color: #666;
  border-bottom: 0;
}

.tv-bar-tab {
  position: absolute;
  right: 13px;
  top: 35px;
  display: flex;
  align-items: center;
  gap: 4px;
  width: 51px;
  height: 18px;
  background: #f2f2f2;
}

.tv-bar-tab span {
  width: 14px;
  height: 18px;
  background: repeating-linear-gradient(#ccc 0 1px, transparent 1px 4px), repeating-linear-gradient(90deg, #ccc 0 1px, #fff 1px 4px);
}

/* Local taskbar */
.taskbar {
  display: flex;
  height: 76px;
  padding: 3px 0 3px 2px;
  border-top: 1px solid #fff;
  background: #d4d0c8;
  font-family: "Liberation Sans", "Noto Sans CJK SC", sans-serif;
}

.start {
  width: 107px;
  border-right: 2px groove #fff;
}

.start button {
  display: flex;
  align-items: center;
  width: 46px;
  height: 21px;
  gap: 1px;
}

.start button,
.task-row button {
  border: 1px solid;
  border-color: #fff #404040 #404040 #fff;
  box-shadow: inset -1px -1px 0 #a0a0a0;
}

.fourball {
  margin: 6px 0 0 65px;
}

.tasks {
  flex: 1;
  display: flex;
  flex-direction: column;
  gap: 3px;
  padding: 0 12px 0 7px;
  min-width: 0;
}

.task-row {
  display: flex;
  gap: 3px;
}

.task-row button {
  flex: 1 1 0;
  display: flex;
  align-items: center;
  gap: 3px;
  min-width: 0;
  height: 21px;
  padding-left: 3px;
  white-space: nowrap;
}

.task-row span {
  display: flex;
  align-items: center;
  justify-content: center;
  width: 31px;
}

.task-row .active {
  border-color: #404040 #fff #fff #404040;
  background: #fff;
  font-weight: bold;
}

.lang {
  display: flex;
  flex-direction: column;
  align-items: center;
  gap: 8px;
  width: 30px;
  padding-top: 3px;
  border-left: 2px groove #fff;
}

.tray {
  display: flex;
  align-items: center;
  width: 148px;
  padding: 0 3px 0 4px;
  border: 1px solid;
  border-color: #808080 #fff #fff #808080;
}

.tray > svg:first-child {
  align-self: flex-start;
  margin-top: 5px;
}

.tray-icons {
  display: grid;
  grid-template-columns: 16px 16px;
  gap: 7px 9px;
  margin-left: 8px;
}

.tray time {
  flex: 1;
  text-align: center;
  line-height: 19px;
}
```
